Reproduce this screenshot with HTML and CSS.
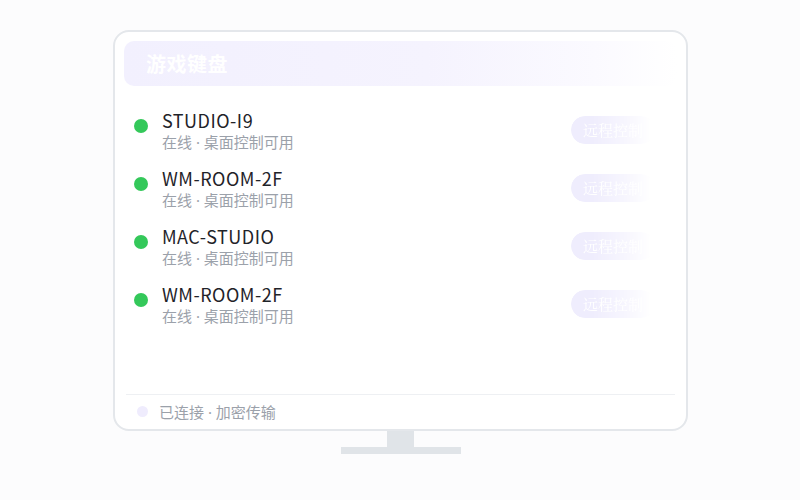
FILE: index.html
```html
<!DOCTYPE html>
<html lang="zh">
<head>
<meta charset="utf-8">
<link rel="stylesheet" href="styles.css">
</head>
<body>
<div class="stage">
  <div class="monitor">
    <div class="screen">
      <div class="header"><span class="title">游戏键盘</span></div>
      <ul class="list">
        <li class="row">
          <span class="dot"></span>
          <div class="info"><div class="name">STUDIO-I9</div><div class="sub">在线 · 桌面控制可用</div></div>
          <span class="btn">远程控制</span>
        </li>
        <li class="row">
          <span class="dot"></span>
          <div class="info"><div class="name">WM-ROOM-2F</div><div class="sub">在线 · 桌面控制可用</div></div>
          <span class="btn">远程控制</span>
        </li>
        <li class="row">
          <span class="dot"></span>
          <div class="info"><div class="name">MAC-STUDIO</div><div class="sub">在线 · 桌面控制可用</div></div>
          <span class="btn">远程控制</span>
        </li>
        <li class="row">
          <span class="dot"></span>
          <div class="info"><div class="name">WM-ROOM-2F</div><div class="sub">在线 · 桌面控制可用</div></div>
          <span class="btn">远程控制</span>
        </li>
      </ul>
      <div class="footer"><span class="fdot"></span><span class="ftext">已连接 · 加密传输</span></div>
    </div>
  </div>
  <div class="neck"></div>
  <div class="base"></div>
</div>
</body>
</html>
```
FILE: styles.css
```css
* { box-sizing: border-box; }
html, body { margin: 0; padding: 0; }
body {
  width: 800px;
  height: 500px;
  background: #fcfcfd;
  font-family: "Noto Sans", "Noto Sans CJK SC", sans-serif;
  overflow: hidden;
}
.stage {
  display: flex;
  flex-direction: column;
  align-items: center;
  padding-top: 30px;
  padding-left: 1px;
}
.monitor {
  width: 575px;
  height: 401px;
  border: 2px solid #e4e7eb;
  border-radius: 16px;
  background: #ffffff;
  padding: 9px 9px 0 9px;
}
.screen {
  height: 100%;
  display: flex;
  flex-direction: column;
}
.header {
  height: 45px;
  border-radius: 10px;
  background: linear-gradient(to right, #f2f0fe 0%, #f5f3fe 55%, #fbfaff 85%, #ffffff 100%);
  display: flex;
  align-items: center;
  padding-left: 22px;
}
.title {
  color: #ffffff;
  font-family: "Noto Sans CJK SC", sans-serif;
  font-size: 20px;
  font-weight: 700;
  letter-spacing: 0.5px;
}
.list {
  list-style: none;
  margin: 0;
  padding: 22px 22px 0 10px;
  flex: 1;
  display: flex;
  flex-direction: column;
  gap: 14px;
}
.row {
  display: flex;
  align-items: center;
  height: 44px;
}
.dot {
  width: 14px;
  height: 14px;
  border-radius: 50%;
  background: #34c85a;
  margin-top: -8px;
  flex: none;
}
.info {
  margin-left: 14px;
  flex: 1;
}
.name {
  font-family: "Noto Sans CJK SC", sans-serif;
  font-size: 18px;
  line-height: 24px;
  color: #1f2329;
  letter-spacing: 0.5px;
}
.sub {
  font-size: 15px;
  line-height: 21px;
  color: #9ba1aa;
}
.btn {
  height: 28px;
  border-radius: 14px;
  padding: 0 12px;
  background: #efedfd;
  color: #ffffff;
  font-family: "Noto Serif CJK SC", serif;
  font-size: 15px;
  line-height: 28px;
  margin-top: 0;
  -webkit-mask-image: linear-gradient(to right, #000 25%, rgba(0,0,0,0.5) 65%, transparent 95%);
  mask-image: linear-gradient(to right, #000 25%, rgba(0,0,0,0.5) 65%, transparent 95%);
}
.footer {
  margin: 0 2px;
  border-top: 1px solid #eef0f3;
  height: 35px;
  display: flex;
  align-items: center;
  padding-left: 11px;
  padding-bottom: 2px;
}
.fdot {
  width: 11px;
  height: 11px;
  border-radius: 50%;
  background: #efecfd;
}
.ftext {
  margin-left: 11px;
  font-size: 15px;
  color: #9ba1aa;
}
.neck {
  width: 27px;
  height: 16px;
  background: #e0e4e8;
}
.base {
  width: 120px;
  height: 7px;
  background: #e0e4e8;
}
```
